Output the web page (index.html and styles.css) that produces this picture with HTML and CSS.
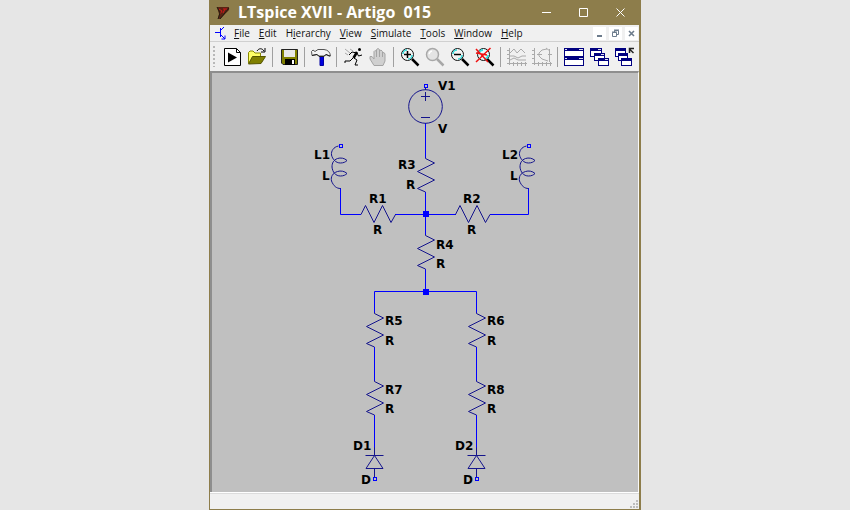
FILE: index.html
```
<!DOCTYPE html>
<html lang="en">
<head>
    <meta charset="UTF-8">
    <meta name="viewport" content="width=device-width, initial-scale=1.0">
    <title>LTspice XVII - Artigo 015</title>
    <link rel="stylesheet" href="styles.css">
</head>
<body>

    <div class="window">
        <header class="title-bar">
            <svg class="app-icon" viewBox="0 0 14 14" aria-hidden="true">
                <path d="M1 1H13V4L4 13H2L3 8Z" fill="#5a2414"/>
                <path d="M3 3L6 5L4 8M7 3H11M9 3L7 7" stroke="#d01818" fill="none"/>
                <path d="M1 1L4 7L2 13M13 2L4 13" stroke="#241c10" fill="none"/>
            </svg>
            <h1 class="title">LTspice XVII - Artigo&nbsp; 015</h1>
            <div class="window-controls">
                <button type="button" aria-label="Minimize"><svg viewBox="0 0 9 9"><path d="M0 4.500H9"/></svg></button>
                <button type="button" aria-label="Maximize"><svg viewBox="0 0 9 9"><path d="M.5 .5H8.5V8.5H.5Z"/></svg></button>
                <button type="button" aria-label="Close"><svg viewBox="0 0 9 9"><path d="M.5 .5L8.5 8.5M8.5 .5L.5 8.5"/></svg></button>
            </div>
        </header>

        <nav class="menu-bar">
            <svg class="doc-icon" viewBox="0 0 12 14" aria-hidden="true">
                <path d="M0 6.500H5M5.500 2V11M5.500 4.500L9 1M5.500 8.500L10 13M10 9.500V13H6.500" fill="none" stroke="#0000ff"/>
            </svg>
            <button type="button"><u>F</u>ile</button>
            <button type="button"><u>E</u>dit</button>
            <button type="button">H<u>i</u>erarchy</button>
            <button type="button"><u>V</u>iew</button>
            <button type="button"><u>S</u>imulate</button>
            <button type="button"><u>T</u>ools</button>
            <button type="button"><u>W</u>indow</button>
            <button type="button"><u>H</u>elp</button>
            <div class="doc-controls">
                <button type="button" aria-label="Minimize document"><svg viewBox="0 0 13 13"><path d="M4 9H9" stroke-width="2"/></svg></button>
                <button type="button" aria-label="Restore document"><svg viewBox="0 0 13 13"><path d="M5.500 5V3.500H9.500V7.500H8M3.500 5.500H7.500V9.500H3.500ZM5 3H10M3 5H8"/></svg></button>
                <button type="button" aria-label="Close document"><svg viewBox="0 0 13 13"><path d="M4 4L9 9M9 4L4 9" stroke-width="1.600"/></svg></button>
            </div>
        </nav>

        <div class="tool-bar">
            <span class="grip"></span>
            <button type="button" aria-label="New schematic"><svg viewBox="0 0 20 20">
                <path d="M2.500 1.500H14.500L18.500 5.500V18.500H2.500Z" fill="#fff" stroke="#000"/>
                <path d="M14.500 1.500V5.500H18.500" fill="none" stroke="#000"/>
                <path d="M6 5.500L15 10.500L6 15.500Z" fill="#000"/>
            </svg></button>
            <button type="button" aria-label="Open"><svg viewBox="0 0 20 20">
                <path d="M1.500 16V5.500L3 4H6L8 6H13.500V9" fill="#ffff66" stroke="#8a8a00"/>
                <path d="M1.500 17L5.500 9.500H18.500L14 16.500Z" fill="#808000" stroke="#555500"/>
                <path d="M10 4C12 1 15 1 17 4M18 1V5H14" fill="none" stroke="#000"/>
            </svg></button>
            <span class="separator"></span>
            <button type="button" aria-label="Save"><svg viewBox="0 0 20 20">
                <path d="M2.500 2.500H18.500V17.500H4L2.500 16Z" fill="#808000" stroke="#222"/>
                <path d="M5 3H16V10H5Z" fill="#e8e8e8"/>
                <path d="M6 12H16V18H6Z" fill="#000"/>
                <path d="M13 13H15V17H13Z" fill="#fff"/>
            </svg></button>
            <span class="separator"></span>
            <button type="button" aria-label="Control panel"><svg viewBox="0 0 20 20">
                <path d="M9 9H12.500V18.500H9Z" fill="#0000e0" stroke="#0000a0"/>
                <path d="M.500 4.500L2 3L4 4.500L7 2.500H13C17 3 19 5 19.500 9H18L15 7.500L13 9H8L6 7.500L3 8L1 8.500Z" fill="#f4f4f4" stroke="#555"/>
                <path d="M1 8.500L6 7.500L8 9.500H13L15 7.500L19 9" fill="none" stroke="#222"/>
            </svg></button>
            <span class="separator"></span>
            <button type="button" aria-label="Run"><svg viewBox="0 0 20 20">
                <circle cx="16.500" cy="2.500" r="1.500" fill="#000"/>
                <path d="M14 5L10.500 11" stroke="#000" stroke-width="2.500" fill="none"/>
                <path d="M14 6L9 5L6 8M14 6L15.500 9L19 8M11 11L14 13L12 18H15M10 11L7 14H2V16" stroke="#000" fill="none"/>
                <path d="M2 2L7 6M2 6L5 8M7 2L10 4" stroke="#aaa" fill="none"/>
            </svg></button>
            <button type="button" aria-label="Halt" disabled><svg viewBox="0 0 20 20">
                <path d="M6 18.500L2 12V9.500H4L6 12V4.500L7 3.500L8.500 4.500V2.500L10 1.500L11.500 2.500V4L13 3L14.500 4.500V6L16 5.500L17 7V14L15 18.500Z" fill="#d0d0d0" stroke="#a4a4a4"/>
                <path d="M8.500 4V10M11.500 4V10M14.500 5V10" stroke="#a4a4a4"/>
            </svg></button>
            <span class="separator"></span>
            <button type="button" aria-label="Zoom in"><svg viewBox="0 0 20 20">
                <path d="M12 12L18.500 18.500" stroke="#000" stroke-width="2.500"/>
                <circle cx="7.500" cy="7.500" r="6" fill="#f4f4f4" stroke="#111"/>
                <path d="M3 7A4 4 0 0 1 7 3M8 12A4 4 0 0 0 12 8" fill="none" stroke="#32dede" stroke-width="1.500"/>
                <path d="M4 7.500H11M7.500 4V11" stroke="#000" stroke-width="1.500"/>
            </svg></button>
            <button type="button" aria-label="Zoom area" disabled><svg viewBox="0 0 20 20">
                <path d="M12 12L18.500 18.500" stroke="#a8a8a8" stroke-width="2.500"/>
                <circle cx="7.500" cy="7.500" r="6" fill="#e4e4e4" stroke="#a8a8a8" stroke-width="1.500"/>
                <path d="M4 7A4 4 0 0 1 7 4" fill="none" stroke="#fff" stroke-width="1.500"/>
            </svg></button>
            <button type="button" aria-label="Zoom out"><svg viewBox="0 0 20 20">
                <path d="M12 12L18.500 18.500" stroke="#000" stroke-width="2.500"/>
                <circle cx="7.500" cy="7.500" r="6" fill="#f4f4f4" stroke="#111"/>
                <path d="M3 7A4 4 0 0 1 7 3M8 12A4 4 0 0 0 12 8" fill="none" stroke="#32dede" stroke-width="1.500"/>
                <path d="M4 7.500H11" stroke="#000" stroke-width="1.500"/>
            </svg></button>
            <button type="button" aria-label="Zoom full extents"><svg viewBox="0 0 20 20">
                <path d="M12 12L18.500 18.500" stroke="#000" stroke-width="2.500"/>
                <circle cx="8.500" cy="7.500" r="6" fill="#e8ffff" stroke="#111"/>
                <path d="M4 7A4 4 0 0 1 8 3M9 12A4 4 0 0 0 13 8" fill="none" stroke="#32dede" stroke-width="2"/>
                <path d="M1 2L13 15M15.500 1L1 15M1 6L12 8" stroke="#f01010" stroke-width="1.500"/>
            </svg></button>
            <span class="separator"></span>
            <button type="button" aria-label="Autorange" disabled><svg viewBox="0 0 20 20">
                <path d="M2.500 1V18M0 16.500H20M0 3.500H3M0 7.500H3M0 11.500H3M6.500 15V19M10.500 15V19M14.500 15V19M18.500 15V19M3 6L7 2L10 6L14 2L18 6M3 9H7L11 11L15 9H19M3 13L7 11L11 13H19" fill="none" stroke="#aaa"/>
            </svg></button>
            <button type="button" aria-label="Pick traces" disabled><svg viewBox="0 0 20 20">
                <path d="M2.500 1V18M0 16.500H20M0 3.500H3M0 7.500H3M0 11.500H3M6.500 15V19M10.500 15V19M14.500 15V19M18.500 15V19M17.500 2V15M15 2L10 3L7 6V9L10 12L16 14M14 1L18 4M5 7.500H10M16 7.500H20" fill="none" stroke="#aaa"/>
            </svg></button>
            <span class="separator"></span>
            <button type="button" aria-label="Tile windows"><svg viewBox="0 0 20 20">
                <path d="M0 1H20V19H0Z" fill="#000080"/>
                <path d="M1 4H19V9H1ZM1 13H19V18H1Z" fill="#fff"/>
                <path d="M1 2H3V3H1ZM15 2H19V3H15ZM1 11H3V12H1ZM15 11H19V12H15Z" fill="#dde"/>
            </svg></button>
            <button type="button" aria-label="Cascade windows"><svg viewBox="0 0 20 20">
                <path d="M1 1H13V10H1ZM5 6H16V14H5ZM9 11H20V19H9Z" fill="#000080"/>
                <path d="M2 4H12V6H5V9H2ZM6 9H15V11H9V13H6ZM10 14H19V18H10Z" fill="#fff"/>
                <path d="M9 2H12V3H9ZM12 7H15V8H12ZM16 12H19V13H16Z" fill="#dde"/>
            </svg></button>
            <button type="button" aria-label="Close windows"><svg viewBox="0 0 20 20">
                <path d="M1 1H12V10H1ZM4 6H14V14H4ZM7 11H18V19H7Z" fill="#000080"/>
                <path d="M2 4H11V6H4V9H2ZM5 9H13V11H7V13H5ZM8 14H17V18H8Z" fill="#fff"/>
                <path d="M19.500 6L15.500 2M15.500 6V1.500H20" fill="none" stroke="#222" stroke-width="1.500"/>
            </svg></button>
        </div>

        <main class="schematic">
            <svg viewBox="212 73 426 419" role="img" aria-label="Schematic">
                <defs>
                    <path id="resistor" d="M0 0V1L9 5.500L-8 14L9 22.500L-8 31L0 34.500"/>
                    <path id="resistor-h" d="M0 0L4.500 -9L13 8L21.500 -9L30 8L34.500 0"/>
                    <path id="inductor" d="M-2 0C-7 1 -9.500 5 -9 9C-8 13 -5 17 0 17C3 17 5 16 6.500 14.500C4 12 0 11.500 -3 12.500C-7 14 -8.500 17 -8.500 21C-8 26 -5 30 0 30C3 30 5 29 6.500 27.500C4 25 0 24.500 -3 25.500C-8 27 -10 31 -9 35C-7 40 -4 42.500 0 42.500"/>
                    <path id="diode" d="M0 0V8M-9 8H9M0 8L-8.500 21H8.500ZM0 21V30"/>
                    <rect id="pin" x="-1.500" y="-1.500" width="3" height="3"/>
                    <rect id="node" x="-3" y="-3" width="6" height="6"/>
                </defs>

                <g class="wires">
                    <path d="M425.500 123V158M425.500 192V235M425.500 269V291"/>
                    <path d="M340.500 188V214.500H361M395 214.500H456M490 214.500H528.500V188"/>
                    <path d="M374.500 313V291.500H476.500V313"/>
                    <path d="M374.500 347V381M374.500 415V448M476.500 347V381M476.500 415V448"/>
                </g>

                <g class="symbols">
                    <circle cx="425.500" cy="106.500" r="16.800"/>
                    <path d="M425.500 87V90M421 96.500H430M425.500 92V101M421 117.500H430"/>
                    <use href="#resistor" x="425.500" y="157.500"/>
                    <use href="#resistor" x="425.500" y="234.500"/>
                    <use href="#resistor" x="374.500" y="312.500"/>
                    <use href="#resistor" x="476.500" y="312.500"/>
                    <use href="#resistor" x="374.500" y="380.500"/>
                    <use href="#resistor" x="476.500" y="380.500"/>
                    <use href="#resistor-h" x="361" y="214.500"/>
                    <use href="#resistor-h" x="455.500" y="214.500"/>
                    <use href="#inductor" x="340.500" y="146"/>
                    <use href="#inductor" x="528.500" y="146"/>
                    <use href="#diode" x="374.500" y="447.500"/>
                    <use href="#diode" x="476.500" y="447.500"/>
                </g>

                <g class="pins">
                    <use href="#pin" x="426" y="86"/>
                    <use href="#pin" x="341" y="146"/>
                    <use href="#pin" x="529" y="146"/>
                    <use href="#pin" x="375" y="479"/>
                    <use href="#pin" x="477" y="479"/>
                </g>

                <g class="nodes">
                    <use href="#node" x="426" y="214"/>
                    <use href="#node" x="426" y="292"/>
                </g>

                <g class="labels">
                    <text x="438" y="90">V1</text>
                    <text x="438" y="133">V</text>
                    <text x="314" y="159">L1</text>
                    <text x="322" y="180">L</text>
                    <text x="502" y="159">L2</text>
                    <text x="510" y="180">L</text>
                    <text x="398" y="169">R3</text>
                    <text x="406" y="189">R</text>
                    <text x="369" y="203">R1</text>
                    <text x="373" y="234">R</text>
                    <text x="463" y="203">R2</text>
                    <text x="467" y="234">R</text>
                    <text x="436" y="249">R4</text>
                    <text x="436" y="268">R</text>
                    <text x="385" y="325">R5</text>
                    <text x="385" y="345">R</text>
                    <text x="487" y="325">R6</text>
                    <text x="487" y="345">R</text>
                    <text x="385" y="394">R7</text>
                    <text x="385" y="413">R</text>
                    <text x="487" y="394">R8</text>
                    <text x="487" y="413">R</text>
                    <text x="353" y="450">D1</text>
                    <text x="361" y="484">D</text>
                    <text x="455" y="450">D2</text>
                    <text x="463" y="484">D</text>
                </g>
            </svg>
        </main>

        <footer class="status-bar">
            <svg class="resize-grip" viewBox="0 0 8 8" aria-hidden="true">
                <path d="M6 0H8V2H6ZM3 3H5V5H3ZM6 3H8V5H6ZM0 6H2V8H0ZM3 6H5V8H3ZM6 6H8V8H6Z" fill="#bdbdbd"/>
            </svg>
        </footer>
    </div>

</body>
</html>
```
FILE: styles.css
```
* {
    box-sizing: border-box;
}
body {
    margin: 0;
    background-color: #e6e6e6;
    font-family: "Open Sans", "Noto Sans", sans-serif;
    color: #111;
}
button {
    display: flex;
    align-items: center;
    justify-content: center;
    margin: 0;
    padding: 0;
    border: 0;
    background: none;
    color: inherit;
    font: inherit;
}
.window {
    display: flex;
    flex-direction: column;
    max-width: 432px;
    min-height: 100vh;
    margin: 0 auto;
    border: 1px solid #8d7d4b;
    border-top: 0;
    border-right-width: 2px;
    background: #f0f0f0;
}

/* title bar */
.title-bar {
    display: flex;
    align-items: center;
    height: 25px;
    padding-left: 6px;
    background: #8d7d4b;
    color: #fff;
}
.app-icon {
    width: 14px;
    height: 14px;
    margin-right: 8px;
}
.title {
    margin: 0;
    font-size: 16px;
    font-weight: bold;
    line-height: 25px;
    white-space: nowrap;
}
.window-controls {
    display: flex;
    margin-left: auto;
}
.window-controls button {
    width: 37px;
    height: 25px;
}
.window-controls svg {
    width: 9px;
    height: 9px;
    fill: none;
    stroke: #fff;
}

/* menu */
.menu-bar {
    display: flex;
    align-items: center;
    gap: 9px;
    height: 17px;
    padding-left: 5px;
    border-bottom: 1px solid #d0d0d0;
    font-size: 10px;
    line-height: 16px;
}
.doc-icon {
    width: 12px;
    height: 14px;
    margin-right: -2px;
}
.doc-controls {
    display: flex;
    gap: 3px;
    margin-left: auto;
    padding-right: 1px;
}
.doc-controls button {
    width: 13px;
    height: 13px;
    background: #fff;
}
.doc-controls svg {
    width: 13px;
    height: 13px;
    fill: none;
    stroke: #6d7c8c;
}

/* toolbar */
.tool-bar {
    display: flex;
    align-items: center;
    height: 29px;
    padding-left: 3px;
}
.tool-bar button {
    width: 25px;
    height: 25px;
}
.tool-bar button svg {
    width: 20px;
    height: 20px;
}
.grip {
    width: 2px;
    height: 21px;
    margin-right: 4px;
    background: repeating-linear-gradient(#b8b8b8 0 2px, #f0f0f0 2px 4px);
}
.separator {
    width: 1px;
    height: 20px;
    margin: 0 3px;
    background: #a0a0a0;
}

/* schematic */
.schematic {
    flex: 1;
    border: 2px solid #8e8e8e;
    border-right: 1px solid #f8f8f8;
    border-bottom: 0;
    background: #c0c0c0;
}
.schematic svg {
    display: block;
    width: 100%;
}
.wires {
    fill: none;
    stroke: #0000ff;
}
.symbols {
    fill: none;
    stroke: #14148c;
}
.pins {
    fill: #c0c0c0;
    stroke: #0000ff;
}
.nodes {
    fill: #0000ff;
}
.labels {
    fill: #000;
    font-family: "DejaVu Sans", Verdana, sans-serif;
    font-size: 12px;
    font-weight: bold;
}

/* status bar */
.status-bar {
    display: flex;
    align-items: flex-end;
    justify-content: flex-end;
    height: 17px;
    border-top: 1px solid #fff;
    box-shadow: inset 0 1px #dcdcdc;
}
.resize-grip {
    width: 8px;
    height: 8px;
    margin: 1px;
}
```
